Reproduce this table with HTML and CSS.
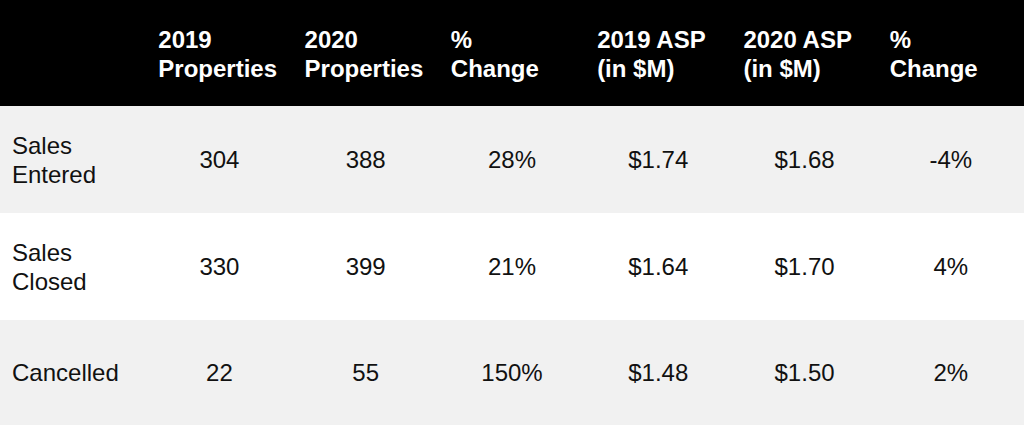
FILE: index.html
```html
<!DOCTYPE html>
<html lang="en">
<head>
<meta charset="utf-8">
<title>Sales comparison</title>
<link rel="stylesheet" href="styles.css">
</head>
<body>
<table class="stats">
  <colgroup>
    <col><col><col><col><col><col><col>
  </colgroup>
  <thead>
    <tr class="head-row">
      <th></th>
      <th>2019<br>Properties</th>
      <th>2020<br>Properties</th>
      <th>%<br>Change</th>
      <th>2019 ASP<br>(in $M)</th>
      <th>2020 ASP<br>(in $M)</th>
      <th>%<br>Change</th>
    </tr>
  </thead>
  <tbody>
    <tr class="row row-shaded">
      <td class="label">Sales<br>Entered</td>
      <td>304</td><td>388</td><td>28%</td><td>$1.74</td><td>$1.68</td><td>-4%</td>
    </tr>
    <tr class="row">
      <td class="label">Sales<br>Closed</td>
      <td>330</td><td>399</td><td>21%</td><td>$1.64</td><td>$1.70</td><td>4%</td>
    </tr>
    <tr class="row row-shaded row-last">
      <td class="label">Cancelled</td>
      <td>22</td><td>55</td><td>150%</td><td>$1.48</td><td>$1.50</td><td>2%</td>
    </tr>
  </tbody>
</table>
</body>
</html>
```
FILE: styles.css
```css
html, body {
  margin: 0;
  padding: 0;
  background: #ffffff;
  overflow: hidden;
}

.stats {
  width: 1024px;
  table-layout: fixed;
  border-collapse: collapse;
  font-family: "Liberation Sans", Arial, Helvetica, sans-serif;
  font-size: 24px;
  line-height: 29px;
  color: #111111;
}

.stats th,
.stats td {
  padding: 0 0 0 12px;
  vertical-align: middle;
}

.head-row {
  height: 106px;
  background: #000000;
}

.head-row th {
  color: #ffffff;
  font-weight: bold;
  text-align: left;
  padding-top: 1px;
}

.row {
  height: 107px;
  background: #ffffff;
}

.row td {
  text-align: center;
  padding: 0;
}

.row td.label {
  text-align: left;
  padding-left: 12px;
}

.row-shaded {
  background: #f1f1f1;
}

.row-last {
  height: 105px;
}
```
